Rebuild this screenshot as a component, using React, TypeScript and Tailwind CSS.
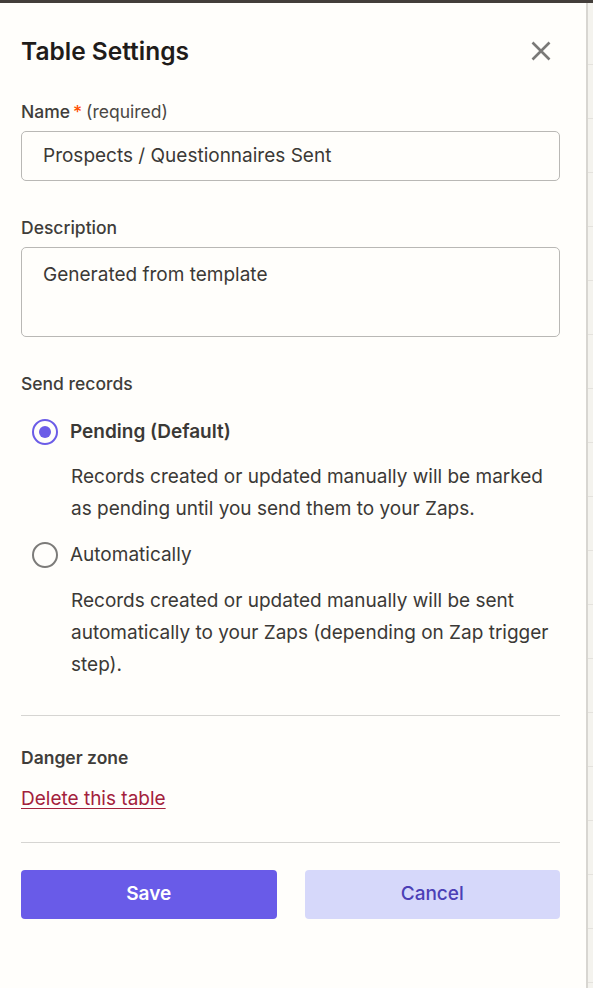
import React from "react";

function Radio({ checked }: { checked: boolean }) {
  return (
    <span
      className={
        "flex h-[26px] w-[26px] shrink-0 items-center justify-center rounded-full border-2 " +
        (checked ? "border-[#6b5ce7]" : "border-[#7c7b79]")
      }
    >
      {checked && <span className="h-[12px] w-[12px] rounded-full bg-[#6b5ce7]" />}
    </span>
  );
}

export default function App() {
  const rows = Array.from({ length: 18 });
  return (
    <div
      className="flex h-[988px] w-[593px] flex-col overflow-hidden bg-[#f4f3ee] text-[#3b3936]"
      style={{ fontFamily: "Inter, 'Noto Sans', sans-serif" }}
    >
      <div className="h-[3px] bg-[#433e3a]" />
      <div className="flex flex-1">
        {/* Settings panel */}
        <div className="flex w-[588px] shrink-0 flex-col border-r-2 border-[#d8d6d1] bg-[#fffefb] pl-[21px] pr-[26px] pt-[34px]">
          <div className="flex h-[28px] items-center justify-between">
            <h1 className="text-[24.5px] font-semibold leading-[28px] text-[#1f1c1a]">
              Table Settings
            </h1>
            <svg width="20" height="20" viewBox="0 0 20 20" className="mr-[9px]">
              <path d="M1.5 1.5 L18.5 18.5 M18.5 1.5 L1.5 18.5" stroke="#7a7977" strokeWidth="2.6" />
            </svg>
          </div>

          {/* Name */}
          <div className="mt-[35px] flex items-center text-[17.5px] leading-[24px]">
            <span className="font-medium text-[#403d3a]">Name</span>
            <span className="ml-[3px] font-medium text-[#ff4f00]">*</span>
            <span className="ml-[4px] text-[#4a4744]">(required)</span>
          </div>
          <div className="mt-[7px] flex h-[50px] items-center rounded-[5px] border border-[#b9b8b5] pl-[21px] text-[19px] text-[#3b3936]">
            Prospects / Questionnaires Sent
          </div>

          {/* Description */}
          <div className="mt-[35px] text-[17.5px] font-medium leading-[24px] text-[#403d3a]">
            Description
          </div>
          <div className="mt-[7px] h-[90px] rounded-[5px] border border-[#b9b8b5] pl-[21px] pt-[13px] text-[19px] leading-[28px] text-[#3b3936]">
            Generated from template
          </div>

          {/* Send records */}
          <div className="mt-[35px] text-[17.5px] font-medium leading-[24px] text-[#403d3a]">
            Send records
          </div>
          <div className="ml-[11px] mt-[22px] flex h-[28px] items-center gap-[12px]">
            <Radio checked />
            <span className="text-[19px] font-semibold leading-[28px] text-[#3b3936]">
              Pending (Default)
            </span>
          </div>
          <p className="mt-[15px] pl-[50px] text-[19px] leading-[32px] text-[#3b3936]">
            Records created or updated manually will be marked as pending until you send them to your Zaps.
          </p>
          <div className="ml-[11px] mt-[16px] flex h-[28px] items-center gap-[12px]">
            <Radio checked={false} />
            <span className="text-[19px] leading-[28px] text-[#3b3936]">Automatically</span>
          </div>
          <p className="mt-[16px] pl-[50px] text-[19px] leading-[32px] text-[#3b3936]">
            Records created or updated manually will be sent automatically to your Zaps (depending on Zap trigger step).
          </p>

          <div className="mt-[34px] h-px bg-[#d6d5d2]" />

          {/* Danger zone */}
          <div className="mt-[30px] text-[17.5px] font-semibold leading-[24px] text-[#403d3a]">
            Danger zone
          </div>
          <a className="mt-[15px] self-start text-[19px] leading-[28px] text-[#a3213c] underline underline-offset-[3px]">
            Delete this table
          </a>

          <div className="mt-[29px] h-px bg-[#d6d5d2]" />

          <div className="mt-[27px] grid grid-cols-2 gap-[28px]">
            <button className="h-[49px] rounded-[4px] bg-[#695be8] text-[19px] font-semibold text-white">
              Save
            </button>
            <button className="h-[49px] rounded-[4px] bg-[#d6d8fa] text-[19px] font-medium text-[#4b3fb6]">
              Cancel
            </button>
          </div>
        </div>

        {/* Table behind */}
        <div className="flex flex-1 flex-col pt-[8px]">
          {rows.map((_, i) => (
            <div key={i} className="h-[54px] shrink-0 border-b border-[#e4e2dd]" />
          ))}
        </div>
      </div>
    </div>
  );
}
